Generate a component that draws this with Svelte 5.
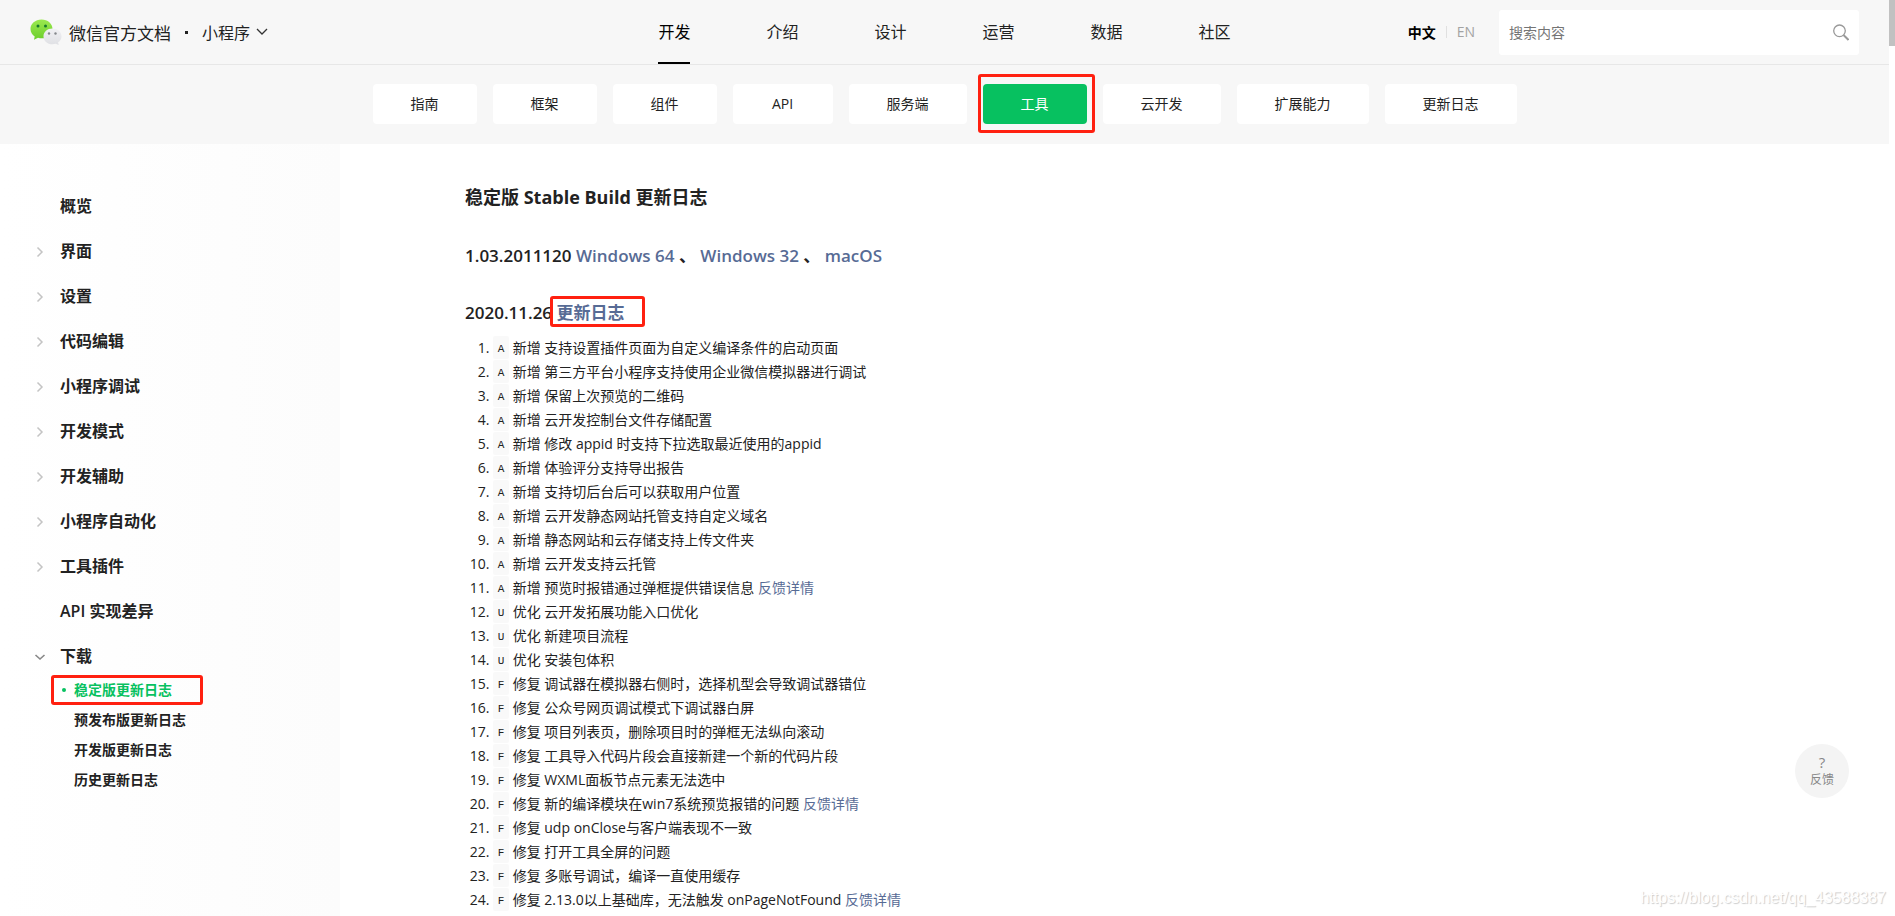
<script>
    const navs = ['开发', '介绍', '设计', '运营', '数据', '社区'];
    const tabs = ['指南', '框架', '组件', 'API', '服务端', '工具', '云开发', '扩展能力', '更新日志'];

    const menus = [
        { name: '概览' },
        { name: '界面', arrow: true },
        { name: '设置', arrow: true },
        { name: '代码编辑', arrow: true },
        { name: '小程序调试', arrow: true },
        { name: '开发模式', arrow: true },
        { name: '开发辅助', arrow: true },
        { name: '小程序自动化', arrow: true },
        { name: '工具插件', arrow: true },
        { name: 'API 实现差异' },
        {
            name: '下载',
            arrow: true,
            children: ['稳定版更新日志', '预发布版更新日志', '开发版更新日志', '历史更新日志']
        }
    ];

    const kinds = { A: '新增', U: '优化', F: '修复' };

    const logs = [
        { kind: 'A', text: '支持设置插件页面为自定义编译条件的启动页面' },
        { kind: 'A', text: '第三方平台小程序支持使用企业微信模拟器进行调试' },
        { kind: 'A', text: '保留上次预览的二维码' },
        { kind: 'A', text: '云开发控制台文件存储配置' },
        { kind: 'A', text: '修改 appid 时支持下拉选取最近使用的appid' },
        { kind: 'A', text: '体验评分支持导出报告' },
        { kind: 'A', text: '支持切后台后可以获取用户位置' },
        { kind: 'A', text: '云开发静态网站托管支持自定义域名' },
        { kind: 'A', text: '静态网站和云存储支持上传文件夹' },
        { kind: 'A', text: '云开发支持云托管' },
        { kind: 'A', text: '预览时报错通过弹框提供错误信息', link: true },
        { kind: 'U', text: '云开发拓展功能入口优化' },
        { kind: 'U', text: '新建项目流程' },
        { kind: 'U', text: '安装包体积' },
        { kind: 'F', text: '调试器在模拟器右侧时，选择机型会导致调试器错位' },
        { kind: 'F', text: '公众号网页调试模式下调试器白屏' },
        { kind: 'F', text: '项目列表页，删除项目时的弹框无法纵向滚动' },
        { kind: 'F', text: '工具导入代码片段会直接新建一个新的代码片段' },
        { kind: 'F', text: 'WXML面板节点元素无法选中' },
        { kind: 'F', text: '新的编译模块在win7系统预览报错的问题', link: true },
        { kind: 'F', text: 'udp onClose与客户端表现不一致' },
        { kind: 'F', text: '打开工具全屏的问题' },
        { kind: 'F', text: '多账号调试，编译一直使用缓存' },
        { kind: 'F', text: '2.13.0以上基础库，无法触发 onPageNotFound', link: true }
    ];

    let activeNav = '开发';
    let activeTab = '工具';
    let activePage = '稳定版更新日志';
    let keyword = '';
</script>

<style>
    :global(body) {
        background: #fff;
        color: #222;
        font-family: "Open Sans", "Noto Sans CJK SC", sans-serif;
        font-size: 14px;
    }

    a {
        color: inherit;
        text-decoration: none;
    }

    button {
        padding: 0;
        border: none;
        background: none;
        color: inherit;
        font: inherit;
        cursor: pointer;
    }

    svg {
        display: block;
        fill: none;
    }

    .page {
        position: relative;
        height: 100vh;
        overflow: hidden;
        padding-right: 6px;
        box-sizing: border-box;
        display: flex;
        flex-direction: column;
    }

    .scrollbar {
        position: absolute;
        top: 0;
        right: 0;
        width: 6px;
        height: 46px;
        background: #c1c1c1;
    }

    /* Header */
    header {
        display: grid;
        grid-template-columns: 1fr auto 1fr;
        align-items: center;
        height: 64px;
        flex: none;
        padding: 0 30px;
        background: #f7f7f7;
        border-bottom: 1px solid #e7e7e7;
    }

    .brand {
        display: flex;
        align-items: center;
    }

    .brand .title {
        margin-left: 7px;
        font-size: 17px;
    }

    .brand .dot {
        width: 3px;
        height: 3px;
        margin: 0 14px;
        background: #222;
    }

    .brand button {
        display: flex;
        align-items: center;
        gap: 6px;
        font-size: 16px;
    }

    nav {
        display: flex;
    }

    .main-nav {
        gap: 76px;
        font-size: 16px;
    }

    .main-nav a {
        line-height: 64px;
    }

    .main-nav a.active {
        color: #000;
        box-shadow: inset 0 -2px #000;
    }

    .tools {
        display: flex;
        align-items: center;
        justify-content: flex-end;
    }

    .tools .lang {
        font-weight: bold;
        color: #000;
    }

    .tools .lang.other {
        padding-left: 10px;
        margin: 0 24px 0 10px;
        border-left: 1px solid #e0e0e0;
        font-weight: normal;
        color: #a3a3a3;
        line-height: 12px;
    }

    .search {
        display: flex;
        align-items: center;
        width: 360px;
        height: 45px;
        padding: 0 10px;
        box-sizing: border-box;
        background: #fff;
        border-radius: 3px;
    }

    .search input {
        flex: 1;
        min-width: 0;
        padding: 0;
        border: none;
        outline: none;
        background: none;
        font: inherit;
    }

    .search input::placeholder {
        color: #757575;
    }

    /* Tabs */
    .tabs {
        justify-content: center;
        gap: 16px;
        flex: none;
        padding: 19px 0 20px;
        background: #f7f7f7;
    }

    .tabs a {
        position: relative;
        min-width: 100px;
        padding: 0 38px;
        box-sizing: border-box;
        background: #fff;
        border-radius: 4px;
        line-height: 40px;
        text-align: center;
    }

    .tabs a.active {
        background: #07c160;
        color: #fff;
    }

    .mark {
        position: absolute;
        border: 3px solid #ff2010;
        border-radius: 3px;
        pointer-events: none;
    }

    .tabs .mark {
        inset: -10px -8px -9px -5px;
    }

    /* Body */
    .body {
        display: flex;
        flex: 1;
        min-height: 0;
    }

    aside {
        width: 340px;
        flex: none;
        padding: 40px 0 0 34px;
        box-sizing: border-box;
        background: linear-gradient(to right, #fff, #fcfcfc);
    }

    aside ul {
        margin: 0;
        padding: 0;
        list-style: none;
        font-weight: 600;
    }

    .menu > li > a {
        display: flex;
        align-items: center;
        font-size: 16px;
        line-height: 45px;
    }

    .arrow {
        width: 12px;
        margin-right: 14px;
    }

    aside .sub {
        margin-top: -4px;
    }

    .sub a {
        position: relative;
        display: block;
        width: 152px;
        margin-left: 17px;
        padding-left: 23px;
        box-sizing: border-box;
        line-height: 30px;
        white-space: nowrap;
    }

    .sub a.active {
        color: #07c160;
    }

    .sub a.active::before {
        content: "";
        position: absolute;
        left: 11px;
        top: 13px;
        width: 4px;
        height: 4px;
        border-radius: 50%;
        background: #07c160;
    }

    .sub .mark {
        inset: 0;
    }

    main {
        flex: 1;
        padding: 37px 0 0 125px;
    }

    main a {
        color: #576b95;
    }

    h1, h2 {
        margin: 0;
    }

    h1 {
        font-size: 18px;
        font-weight: bold;
        line-height: 32px;
    }

    h2 {
        margin-top: 29px;
        font-size: 17px;
        font-weight: 600;
        line-height: 28px;
    }

    h2 a {
        position: relative;
    }

    h2 .mark {
        inset: -5px -20px -3px -7px;
    }

    ol {
        margin: 9px 0 0;
        padding-left: 28px;
    }

    li {
        white-space: nowrap;
    }

    ol li {
        line-height: 24px;
    }

    code {
        display: inline-block;
        width: 16px;
        height: 23px;
        background: #f9f9f9;
        border-radius: 2px;
        font: 11px/26px "Liberation Mono", monospace;
        text-align: center;
        vertical-align: top;
    }

    .feedback {
        position: absolute;
        right: 46px;
        bottom: 118px;
        display: flex;
        flex-direction: column;
        align-items: center;
        justify-content: center;
        width: 54px;
        height: 54px;
        border-radius: 50%;
        background: #f4f4f4;
        color: #888;
        font-size: 12px;
        line-height: 17px;
    }

    .feedback .ask {
        font-size: 15px;
    }

    .watermark {
        position: absolute;
        right: 9px;
        bottom: 8px;
        color: #fff;
        font-family: "Liberation Sans", Arial, sans-serif;
        font-size: 16px;
        line-height: 20px;
        text-shadow: 1px 1px 1px #ccc;
    }
</style>

<div class="page">
    <header>
        <div class="brand">
            <svg width="32" height="26" viewBox="0 0 32 26">
                <defs>
                    <linearGradient id="green" x1="0" y1="0" x2="0" y2="1">
                        <stop offset="0" stop-color="#9be94f" />
                        <stop offset="1" stop-color="#6cce2c" />
                    </linearGradient>
                    <linearGradient id="grey" x1="0" y1="0" x2="0" y2="1">
                        <stop offset="0" stop-color="#f1f1f4" />
                        <stop offset="1" stop-color="#dfe0e4" />
                    </linearGradient>
                </defs>
                <path fill="url(#green)" d="M11.5 0.5C5.2 0.5 0.5 4.8 0.5 10c0 3.2 1.6 5.8 4.2 7.6L4 20.8l4-2c1.2 0.4 2.5 0.5 3.8 0.5 6 0 10.7-4.2 10.7-9.4S17.8 0.5 11.5 0.5z" />
                <path fill="url(#grey)" d="M22.5 9.5c-5.2 0-9 3.5-9 7.9s3.8 7.8 9 7.8c1.1 0 2.2-0.2 3.2-0.5l3 1.3-0.6-2.7c2.2-1.5 3.4-3.5 3.4-5.9 0-4.4-3.8-7.9-9-7.9z" />
                <circle cx="8" cy="7" r="1.5" fill="#187a2c" />
                <circle cx="15.5" cy="7" r="1.5" fill="#187a2c" />
                <circle cx="19" cy="14.5" r="1.2" fill="#85888c" />
                <circle cx="25.5" cy="14.5" r="1.2" fill="#85888c" />
            </svg>
            <span class="title">微信官方文档</span>
            <span class="dot"></span>
            <button>
                小程序
                <svg width="12" height="8" viewBox="0 0 12 8" stroke="#333" stroke-width="1.3">
                    <path d="M1 1l5 5 5-5" />
                </svg>
            </button>
        </div>
        <nav class="main-nav">
            {#each navs as nav}
                <a href="#nav" class:active={nav === activeNav}>{nav}</a>
            {/each}
        </nav>
        <div class="tools">
            <a class="lang" href="#zh">中文</a>
            <a class="lang other" href="#en">EN</a>
            <label class="search">
                <input type="text" placeholder="搜索内容" aria-label="搜索内容" bind:value={keyword}>
                <svg width="16" height="17" viewBox="0 0 16 17" stroke="#999" stroke-width="1.3">
                    <circle cx="6.5" cy="6.8" r="5.8" />
                    <path d="M10.5 11l5 5" stroke-width="2" />
                </svg>
            </label>
        </div>
    </header>

    <nav class="tabs">
        {#each tabs as tab}
            <a href="#tab" class:active={tab === activeTab}>
                {tab}
                {#if tab === activeTab}
                    <span class="mark"></span>
                {/if}
            </a>
        {/each}
    </nav>

    <div class="body">
        <aside>
            <ul class="menu">
                {#each menus as menu}
                    <li>
                        <a href="#menu">
                            <span class="arrow">
                                {#if menu.children}
                                    <svg width="12" height="12" viewBox="0 0 12 12" stroke="#888" stroke-width="1.6">
                                        <path d="M1.5 4l4.5 4 4.5-4" />
                                    </svg>
                                {:else if menu.arrow}
                                    <svg width="12" height="12" viewBox="0 0 12 12" stroke="#c4c4c4" stroke-width="1.5">
                                        <path d="M3.5 1.5L8 6l-4.5 4.5" />
                                    </svg>
                                {/if}
                            </span>
                            {menu.name}
                        </a>
                        {#if menu.children}
                            <ul class="sub">
                                {#each menu.children as child}
                                    <li>
                                        <a href="#page" class:active={child === activePage}>
                                            {child}
                                            {#if child === activePage}
                                                <span class="mark"></span>
                                            {/if}
                                        </a>
                                    </li>
                                {/each}
                            </ul>
                        {/if}
                    </li>
                {/each}
            </ul>
        </aside>

        <main>
            <h1>稳定版 Stable Build 更新日志</h1>
            <h2>1.03.2011120 <a href="#win64">Windows 64</a> 、 <a href="#win32">Windows 32</a> 、 <a href="#mac">macOS</a></h2>
            <h2>2020.11.26 <a href="#log">更新日志<span class="mark"></span></a></h2>
            <ol>
                {#each logs as log}
                    <li>
                        <code>{log.kind}</code>
                        {kinds[log.kind]} {log.text}
                        {#if log.link}
                            <a href="#detail">反馈详情</a>
                        {/if}
                    </li>
                {/each}
            </ol>
        </main>
    </div>

    <button class="feedback">
        <span class="ask">?</span>
        <span>反馈</span>
    </button>
    <div class="watermark">https://blog.csdn.net/qq_43588387</div>
    <div class="scrollbar"></div>
</div>
